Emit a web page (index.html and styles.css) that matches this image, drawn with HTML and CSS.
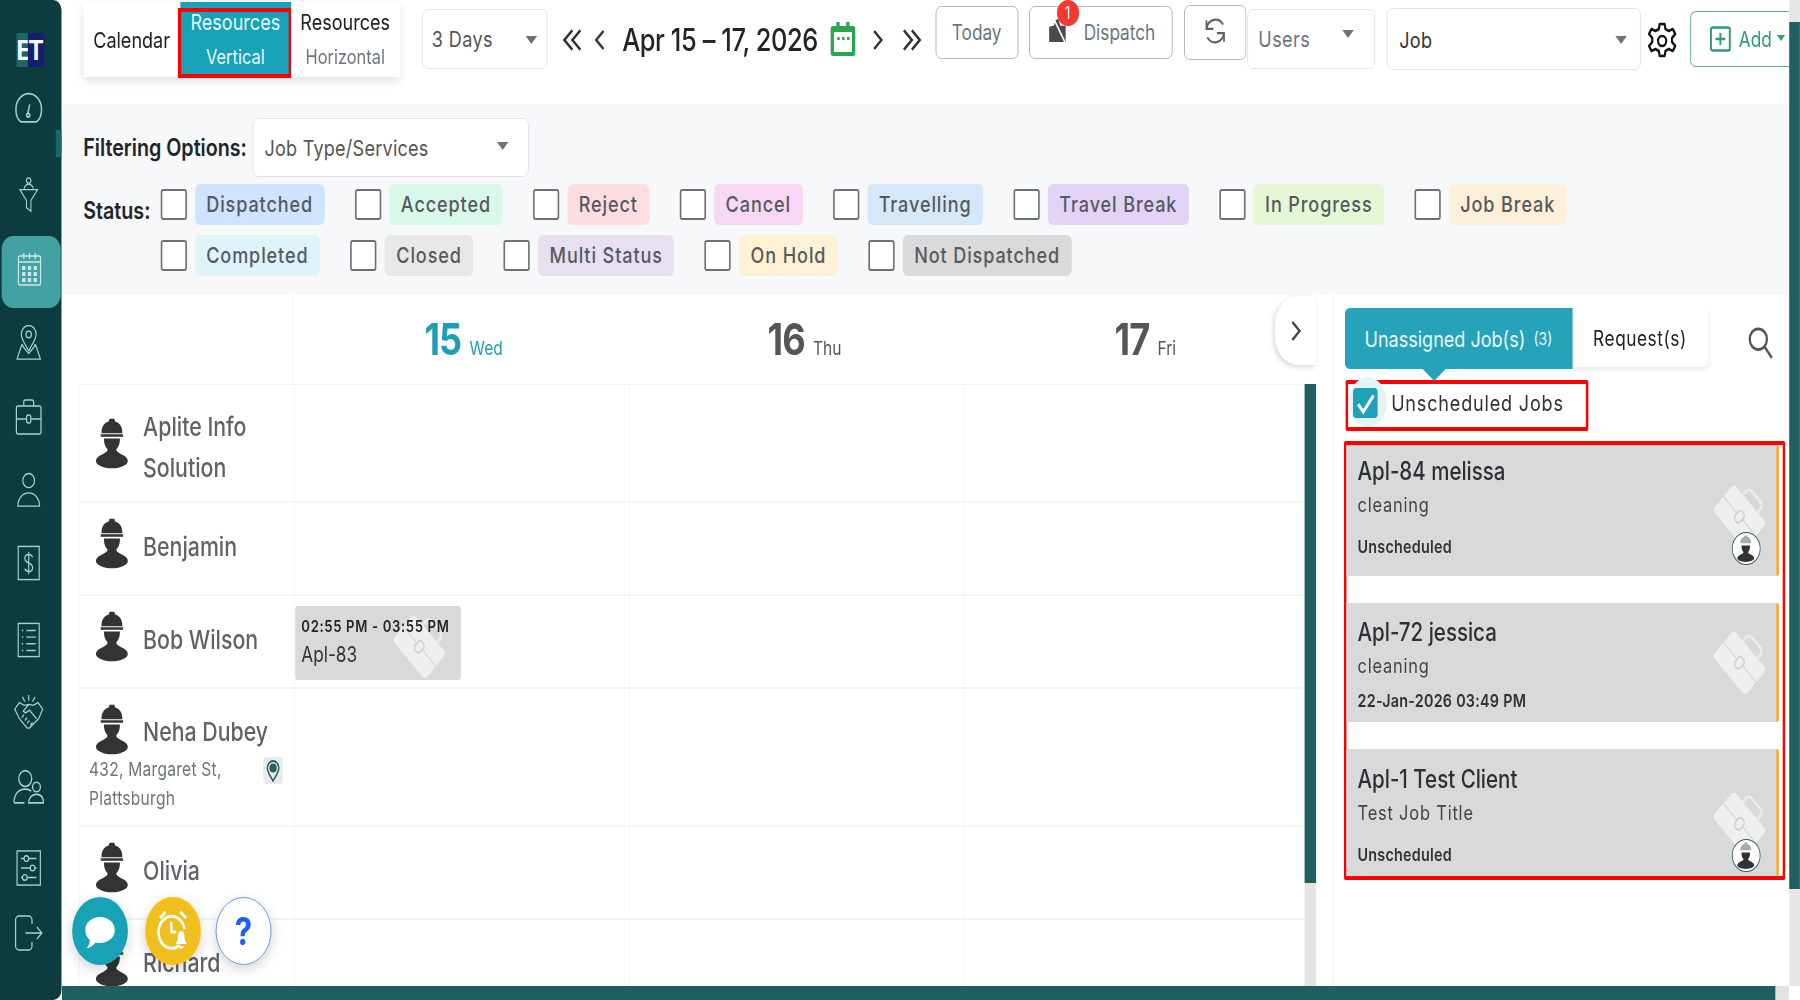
FILE: index.html
```html
<!DOCTYPE html>
<html lang="en">
<head>
<meta charset="utf-8">
<title>Scheduler</title>
<link rel="stylesheet" href="styles.css">
</head>
<body>
<svg class="defs" width="0" height="0" aria-hidden="true">
  <symbol id="worker" viewBox="0 0 40 52">
    <path fill="#333" d="M7 15c0-6 4-10 9-11l1-3h6l1 3c5 1 9 5 9 11v1H7z"/>
    <path fill="#333" d="M6 17h28v2.500H6z"/>
    <path fill="#333" d="M10 21.500h20c0 5-1 8-4.500 11 0 2 1.500 3 5 4.500 5 2 9.500 4 9.500 7.500 0 4-9 7.500-20 7.500s-20-3.500-20-7.500c0-3.500 4.500-5.500 9.500-7.500 3.500-1.500 5-2.500 5-4.500-3.500-3-4.500-6-4.500-11z"/>
  </symbol>
  <symbol id="case" viewBox="0 0 64 64">
    <g transform="rotate(45 32 32)">
      <rect x="7" y="19" width="50" height="33" rx="4" fill="#efefef"/>
      <path d="M21 19v-5a4 4 0 0 1 4-4h14a4 4 0 0 1 4 4v5" fill="none" stroke="#ececec" stroke-width="2.500"/>
      <path d="M7 35h50" stroke="#d9d9d9" stroke-width="1.500"/>
      <rect x="28" y="30" width="8" height="11" rx="3.500" fill="#efefef" stroke="#cfcfcf" stroke-width="1.500"/>
    </g>
  </symbol>
  <symbol id="worker-mini" viewBox="0 0 40 52">
    <path fill="#a9abab" d="M7 16c0-7 5-12 9-12l1-3h6l1 3c4 0 9 5 9 12z"/>
    <path fill="#333" d="M10 20h20c0 6-1 9-4.500 12.500 0 2 1.500 3 5 4.500 5 2 9.500 4 9.500 7.500 0 4-9 7.500-20 7.500s-20-3.500-20-7.500c0-3.500 4.500-5.500 9.500-7.500 3.500-1.500 5-2.500 5-4.500-3.500-3.500-4.500-6.500-4.500-12.500z"/>
  </symbol>
</svg>
<div class="viewport">
<div class="stage">
  <aside class="sidebar">
    <div class="logo"><span class="logo-e">E</span><span class="logo-t">T</span></div>
    <span class="notch"></span>
    <nav class="nav">
      <a class="nav-item"><svg class="ico" viewBox="0 0 30 30"><path d="M7 26.500C3.500 24.500 2 20 2 16a13 13 0 0 1 26 0c0 4-1.500 8.500-5 10.500zM14 20l2-8"/><circle cx="14.500" cy="21" r="1.500"/></svg></a>
      <a class="nav-item"><svg class="ico" viewBox="0 0 30 40"><circle cx="15" cy="4" r="3"/><path d="M9 13c0-3 3-5 6-5s6 2 6 5M3 14h24l-9 12v12l-6-4v-8z"/></svg></a>
      <a class="nav-item nav-active"><svg class="ico ico-cal" viewBox="0 0 30 36"><rect x="1.500" y="5" width="27" height="29" rx="2"/><path d="M1.500 11h27M8 2v6M15 2v6M22 2v6"/><g class="dots"><rect x="6" y="15" width="4" height="4"/><rect x="13" y="15" width="4" height="4"/><rect x="20" y="15" width="4" height="4"/><rect x="6" y="21" width="4" height="4"/><rect x="13" y="21" width="4" height="4"/><rect x="20" y="21" width="4" height="4"/><rect x="6" y="27" width="4" height="4"/><rect x="13" y="27" width="4" height="4"/><rect x="20" y="27" width="4" height="4"/></g></svg></a>
      <a class="nav-item"><svg class="ico" viewBox="0 0 32 38"><path d="M16 27C11 20 6.500 15 6.500 10a9.500 9.500 0 0 1 19 0c0 5-4.500 10-9.500 17z"/><circle cx="16" cy="10" r="3.500"/><path d="M9 21l-2 0-6 15h30l-6-15h-2M7 21l9 9 9-9"/></svg></a>
      <a class="nav-item"><svg class="ico" viewBox="0 0 32 36"><rect x="1" y="7" width="30" height="28" rx="2"/><path d="M10 7V3a2 2 0 0 1 2-2h8a2 2 0 0 1 2 2v4M1 20h12M19 20h12"/><rect x="13.500" y="16" width="5" height="8" rx="2"/></svg></a>
      <a class="nav-item"><svg class="ico" viewBox="0 0 32 38"><circle cx="16" cy="9" r="7.500"/><path d="M2 36c0-8 6-14 14-14s14 6 14 14z"/></svg></a>
      <a class="nav-item"><svg class="ico" viewBox="0 0 30 38"><rect x="1.500" y="1.500" width="27" height="35"/><path d="M20 13c-1-2-3-3-5-3-3 0-5 1.500-5 4s2 4 5 5 5 2.500 5 5-2 4-5 4c-2 0-4-1-5-3M15 7v24"/></svg></a>
      <a class="nav-item"><svg class="ico" viewBox="0 0 30 38"><rect x="1.500" y="1.500" width="27" height="35"/><path d="M12 9h12M12 16h12M12 23h12M12 30h12M6 9h2M6 16h2M6 23h2M6 30h2"/></svg></a>
      <a class="nav-item"><svg class="ico" viewBox="0 0 38 38"><path d="M19 1v6M11 3l3 5M27 3l-3 5M1 16l6-7 6 3 6-1 6 1 6-3 6 7-5 10-12 10h-3L7 26zM19 11l-7 7 3 2 5-3 9 9M14 28l3-3M17 31l3-3M10 25l3-3M21 33l3-3"/></svg></a>
      <a class="nav-item"><svg class="ico" viewBox="0 0 36 34"><circle cx="14" cy="9" r="7.500"/><path d="M1 32c0-8 5-13 13-13 3 0 5 .500 7 2M13 32H1"/><circle cx="27" cy="17" r="4.500"/><path d="M18 32c0-5 4-8 9-8s8 3 8 8z"/></svg></a>
      <a class="nav-item"><svg class="ico" viewBox="0 0 32 38"><rect x="1" y="1" width="30" height="36"/><path d="M6 9h4M16 9h10M6 19h12M24 19h2M6 29h2M14 29h12"/><circle cx="13" cy="9" r="3"/><circle cx="21" cy="19" r="3"/><circle cx="11" cy="29" r="3"/></svg></a>
      <a class="nav-item"><svg class="ico" viewBox="0 0 34 36"><path d="M21 9V5a4 4 0 0 0-4-4H5a4 4 0 0 0-4 4v26a4 4 0 0 0 4 4h12a4 4 0 0 0 4-4v-4M13 18h20M27 12l6 6-6 6"/></svg></a>
    </nav>
  </aside>

  <div class="main">
    <div class="body">
      <div class="content">
        <header class="topbar">
          <div class="tabs">
            <div class="tab tab-cal"><span>Calendar</span></div>
            <div class="tab tab-vert"><span>Resources</span><small>Vertical</small></div>
            <div class="tab tab-horiz"><span>Resources</span><small>Horizontal</small></div>
          </div>
          <div class="select sel-days"><span>3 Days</span><i class="caret"></i></div>
          <svg class="chev chev-d1" viewBox="0 0 24 24"><path d="M12 3 3 12l9 9M21 3l-9 9 9 9"/></svg>
          <svg class="chev chev-s1" viewBox="0 0 14 24"><path d="M12 3 3 12l9 9"/></svg>
          <div class="date">Apr 15 – 17, 2026</div>
          <svg class="date-ico" viewBox="0 0 32 34"><path fill="#2ea44f" d="M8 0h4v4h8V0h4v4h4a3 3 0 0 1 3 3v24a3 3 0 0 1-3 3H4a3 3 0 0 1-3-3V7a3 3 0 0 1 3-3h4z"/><rect x="5" y="10" width="22" height="20" fill="#fff"/><path fill="#2ea44f" d="M9 15h3v3H9zM15 15h3v3h-3zM21 15h3v3h-3z"/></svg>
          <svg class="chev chev-s2" viewBox="0 0 14 24"><path d="M2 3l9 9-9 9"/></svg>
          <svg class="chev chev-d2" viewBox="0 0 24 24"><path d="M3 3l9 9-9 9M12 3l9 9-9 9"/></svg>
          <div class="btn btn-today">Today</div>
          <div class="btn btn-dispatch">
            <svg class="dispatch-ico" viewBox="0 0 24 24"><path fill="#4a4a4a" d="M1 8l6-1 2-6 4-1 2 7h7v17H1z"/><path d="M7 0l14 24" stroke="#fff" stroke-width="2"/></svg>
            <span>Dispatch</span>
            <b class="badge">1</b>
          </div>
          <div class="btn btn-refresh"><svg viewBox="0 0 28 28" class="refresh-ico"><path d="M4 12A10.500 10.500 0 0 1 23 8M24 16A10.500 10.500 0 0 1 5 20M4 4v8h8M24 24v-8h-8"/></svg></div>
          <div class="select sel-users"><span>Users</span><i class="caret"></i></div>
          <div class="select sel-job"><span>Job</span><i class="caret"></i></div>
          <svg class="gear" viewBox="0 0 38 38"><path d="M16 2h6l1 5 4 2 5-2 3 5-4 4v4l4 4-3 5-5-2-4 2-1 5h-6l-1-5-4-2-5 2-3-5 4-4v-4l-4-4 3-5 5 2 4-2z" stroke-linejoin="round"/><circle cx="19" cy="19" r="5"/></svg>
          <div class="btn-add">
            <svg class="add-ico" viewBox="0 0 26 26"><rect x="1.500" y="1.500" width="23" height="23" rx="2"/><path d="M13 7v12M7 13h12"/></svg>
            <span>Add</span><i class="caret caret-green"></i>
          </div>
        </header>

        <section class="filters">
          <div class="filter-row">
            <label class="filter-label">Filtering Options:</label>
            <div class="select sel-type"><span>Job Type/Services</span><i class="caret"></i></div>
          </div>
          <div class="status-block">
            <label class="status-label">Status:</label>
            <div class="status-rows">
              <div class="status-row">
                <span class="cb"></span><span class="pill p-dispatched">Dispatched</span>
                <span class="cb"></span><span class="pill p-accepted">Accepted</span>
                <span class="cb"></span><span class="pill p-reject">Reject</span>
                <span class="cb"></span><span class="pill p-cancel">Cancel</span>
                <span class="cb"></span><span class="pill p-travelling">Travelling</span>
                <span class="cb"></span><span class="pill p-break">Travel Break</span>
                <span class="cb"></span><span class="pill p-progress">In Progress</span>
                <span class="cb"></span><span class="pill p-jobbreak">Job Break</span>
              </div>
              <div class="status-row">
                <span class="cb"></span><span class="pill p-completed">Completed</span>
                <span class="cb"></span><span class="pill p-closed">Closed</span>
                <span class="cb"></span><span class="pill p-multi">Multi Status</span>
                <span class="cb"></span><span class="pill p-hold">On Hold</span>
                <span class="cb"></span><span class="pill p-notdisp">Not Dispatched</span>
              </div>
            </div>
          </div>
        </section>

        <section class="workspace">
          <div class="scheduler">
            <div class="sched-head">
              <div class="head-blank"></div>
              <div class="day day-today"><b>15</b><span>Wed</span></div>
              <div class="day"><b>16</b><span>Thu</span></div>
              <div class="day"><b>17</b><span>Fri</span></div>
              <div class="collapse"><svg viewBox="0 0 14 24"><path d="M3 3l9 9-9 9"/></svg></div>
            </div>
            <div class="sched-body">
              <div class="rows">
                <div class="row row-a"><div class="res"><svg class="worker"><use href="#worker"/></svg><div class="res-name">Aplite Info<br>Solution</div></div><div class="cell"></div><div class="cell"></div><div class="cell"></div></div>
                <div class="row row-b"><div class="res"><svg class="worker"><use href="#worker"/></svg><div class="res-name">Benjamin</div></div><div class="cell"></div><div class="cell"></div><div class="cell"></div></div>
                <div class="row row-b"><div class="res"><svg class="worker"><use href="#worker"/></svg><div class="res-name">Bob Wilson</div></div>
                  <div class="cell">
                    <div class="event">
                      <svg class="wm wm-ev"><use href="#case"/></svg>
                      <div class="ev-time">02:55 PM - 03:55 PM</div>
                      <div class="ev-title">Apl-83</div>
                    </div>
                  </div><div class="cell"></div><div class="cell"></div></div>
                <div class="row row-n"><div class="res res-col"><div class="res-top"><svg class="worker"><use href="#worker"/></svg><div class="res-name">Neha Dubey</div></div>
                    <div class="addr"><span>432, Margaret St,<br>Plattsburgh</span><i class="pin"><svg viewBox="0 0 16 22"><path d="M8 21C4 15 1 12 1 8a7 7 0 0 1 14 0c0 4-3 7-7 13z" fill="none" stroke="#2f5d5f" stroke-width="1.800"/><circle cx="8" cy="8" r="4.500" fill="#2f5d5f"/></svg></i></div></div>
                  <div class="cell"></div><div class="cell"></div><div class="cell"></div></div>
                <div class="row row-b"><div class="res"><svg class="worker"><use href="#worker"/></svg><div class="res-name">Olivia</div></div><div class="cell"></div><div class="cell"></div><div class="cell"></div></div>
                <div class="row row-r"><div class="res"><svg class="worker"><use href="#worker"/></svg><div class="res-name">Richard</div></div><div class="cell"></div><div class="cell"></div><div class="cell"></div></div>
              </div>
              <div class="vscroll"><span class="vthumb"></span></div>
            </div>
          </div>

          <aside class="panel">
            <div class="panel-tabs">
              <div class="ptab ptab-on">Unassigned Job(s)<small>(3)</small></div>
              <div class="ptab ptab-off">Request(s)</div>
              <svg class="search" viewBox="0 0 28 30"><circle cx="12" cy="12" r="9.500"/><path d="M19 19l8 10"/></svg>
            </div>
            <div class="unsched">
              <span class="cb-on"><svg viewBox="0 0 24 24"><path d="M5 13l5 6 10-13"/></svg></span>
              <span class="unsched-text">Unscheduled Jobs</span>
            </div>
            <div class="cards">
              <article class="card card-a">
                <svg class="wm wm-card"><use href="#case"/></svg>
                <h3>Apl-84 melissa</h3><p class="sub">cleaning</p><p class="when">Unscheduled</p>
                <span class="avatar"><svg><use href="#worker-mini"/></svg></span>
              </article>
              <article class="card card-b">
                <svg class="wm wm-card"><use href="#case"/></svg>
                <h3>Apl-72 jessica</h3><p class="sub">cleaning</p><p class="when">22-Jan-2026 03:49 PM</p>
              </article>
              <article class="card card-c">
                <svg class="wm wm-card"><use href="#case"/></svg>
                <h3>Apl-1 Test Client</h3><p class="sub">Test Job Title</p><p class="when">Unscheduled</p>
                <span class="avatar"><svg><use href="#worker-mini"/></svg></span>
              </article>
            </div>
          </aside>
        </section>
      </div>
      <div class="rail"><span class="rail-thumb"></span></div>
    </div>
    <div class="hbar"><span class="hthumb"></span></div>
  </div>

  <div class="fab fab-chat"><svg viewBox="0 0 40 36"><path fill="#fff" d="M20 2c10 0 18 5.500 18 13s-8 13-18 13c-2 0-4-.200-5.500-.600C12 30 8 33 4 33c2-2 3.500-5 3.500-8C4 22.500 2 19 2 15 2 7.500 10 2 20 2z"/></svg></div>
  <div class="fab fab-alarm"><svg viewBox="0 0 44 44"><g fill="none" stroke="#fff" stroke-width="3"><path d="M30 36A16 16 0 1 1 36 20"/><path d="M6 9l7-6M38 9l-7-6"/><path d="M20 13v10h6"/></g><path fill="#fff" d="M32 22c3 0 4 3 4 6 0 4 2 5 3 7H25c1-2 3-3 3-7 0-3 1-6 4-6zM29 37h6c0 2-1.500 3-3 3s-3-1-3-3z"/></svg></div>
  <div class="fab fab-help">?</div>
</div>
</div>
</body>
</html>
```
FILE: styles.css
```css
* { box-sizing: border-box; }
html, body { margin: 0; padding: 0; height: 100%; overflow: hidden; background: #fff; }
body { font-family: Inter, "Noto Sans", sans-serif; color: #212529; }
.defs { position: absolute; }

/* The reference is a wide page squeezed into the window horizontally. */
.viewport { width: 1800px; height: 1000px; overflow: hidden; }
.stage { position: relative; display: flex; width: 2195px; height: 1000px; transform: scaleX(.82); transform-origin: 0 0; overflow: hidden; }

/* sidebar */
.sidebar { position: relative; width: 74.5px; flex: none; height: 1000px; background: #0c3c3f; border-radius: 0 10px 10px 0; z-index: 3; }
.logo { display: flex; width: 34px; height: 34px; margin: 33px 0 0 20px; font: 700 29px/34px "Liberation Sans", sans-serif; color: #fff; text-align: center; }
.logo-e { width: 14px; background: #1f6664; }
.logo-t { width: 20px; background: #14206e; }
.notch { position: absolute; right: 0; top: 130px; width: 7px; height: 27px; background: #176a69; }
.nav { display: flex; flex-direction: column; margin-top: 15px; }
.nav-item { display: flex; height: 52px; align-items: center; justify-content: center; padding-right: 4px; }
.nav-item:nth-child(2) { margin-top: 35px; }
.nav-item:nth-child(3) { margin-top: 15px; }
.nav-item:nth-child(4) { margin-top: 9px; }
.nav-item:nth-child(5) { margin-top: 22px; }
.nav-item:nth-child(6) { margin-top: 21px; }
.nav-item:nth-child(7) { margin-top: 21px; }
.nav-item:nth-child(8) { margin-top: 25px; }
.nav-item:nth-child(9) { margin-top: 20px; }
.nav-item:nth-child(10) { margin-top: 23px; }
.nav-item:nth-child(11) { margin-top: 29px; }
.nav-item:nth-child(12) { margin-top: 13px; }
.nav-active { height: 72px; margin-left: 1.500px; margin-right: 1px; background: #42a1a2; border-radius: 14px; padding-bottom: 7px; }
.ico { width: 38px; height: 36px; fill: none; stroke: #a6d2cd; stroke-width: 1.500; }
.ico-cal .dots { fill: #cfe6e4; stroke: none; }
.ico-cal { stroke: #cfe6e4; }

/* main */
.main { flex: 1; display: flex; flex-direction: column; min-width: 0; }
.body { display: flex; height: 986px; }
.content { flex: 1; min-width: 0; display: flex; flex-direction: column; }
.rail { position: relative; width: 13.500px; flex: none; background: #e6e6e6; }
.rail-thumb { position: absolute; left: 0; right: 0; top: 22px; height: 867px; background: #1f5f60; }
.hbar { height: 14px; width: 2107px; background: #e3e3e3; flex: none; }
.hthumb { display: block; width: 2090px; height: 14px; background: #1f5f60; }

/* topbar */
.topbar { height: 104px; flex: none; display: flex; align-items: flex-start; padding-left: 27px; overflow: hidden; }
.tabs { display: flex; height: 75px; margin-top: 2px; background: #fff; box-shadow: 0 4px 10px rgba(0,0,0,.12); }
.tab { display: flex; flex-direction: column; align-items: center; justify-content: center; font-size: 22px; color: #222; }
.tab-cal { width: 118px; }
.tab-vert { position: relative; width: 135px; background: #17a2b8; color: #e8f8fa; z-index: 1; }
.tab-vert::after { content: ""; position: absolute; left: -3px; right: 0; top: 6px; bottom: -1px; border: 4px solid #f00; border-left-width: 4px; border-right-width: 3.500px; }
.tab-horiz { width: 133px; }
.tab span { line-height: 34px; }
.tab small { font-size: 20px; line-height: 34px; margin-top: 1px; }
.tab-horiz small { color: #6c757d; }
.select { position: relative; display: flex; align-items: center; background: #fff; border: 1.500px solid #dfe1e8; border-radius: 7px; font-size: 22px; color: #555; padding-left: 11px; letter-spacing: .5px; }
.caret { position: absolute; right: 12px; top: 50%; margin-top: -3px; border: 7.500px solid transparent; border-top: 8.500px solid #6f7277; border-bottom: 0; }
.sel-days { width: 155px; height: 60px; margin: 9px 0 0 27px; }
.chev { fill: none; stroke: #333; stroke-width: 2.600; height: 26px; flex: none; margin-top: 27px; }
.chev-d1 { width: 26px; margin-left: 17px; }
.chev-s1 { width: 14px; margin-left: 13px; }
.date { width: 246px; margin: 21px 0 0 21px; font-size: 31px; line-height: 38px; font-weight: 500; letter-spacing: -.5px; color: #212529; white-space: nowrap; }
.date-ico { width: 32px; height: 34px; flex: none; margin: 22px 0 0 10px; }
.chev-s2 { width: 14px; margin-left: 20px; }
.chev-d2 { width: 26px; margin-left: 21px; }
.btn { position: relative; display: flex; align-items: center; justify-content: center; height: 53px; margin-top: 6px; border: 1.500px solid #adb1b6; border-radius: 7px; font-size: 21px; color: #6c757d; background: #fff; flex: none; }
.btn-today { width: 101px; margin-left: 16px; }
.btn-dispatch { width: 175px; margin-left: 13px; justify-content: flex-start; padding-left: 22px; overflow: visible; }
.dispatch-ico { width: 24px; height: 23px; margin-right: 20px; margin-top: -5px; }
.badge { position: absolute; left: 33px; top: -7.500px; width: 27px; height: 26px; border-radius: 50%; background: #f4392f; color: #fff; font-size: 17px; font-weight: 400; line-height: 26px; text-align: center; }
.btn-refresh { width: 76px; height: 55px; margin: 5px 0 0 14px; }
.refresh-ico { width: 34px; height: 30px; fill: none; stroke: #5f6368; stroke-width: 2; margin-bottom: 4px; }
.sel-users { width: 158.5px; height: 60px; margin: 9px 0 0 1px; padding-left: 13px; }
.sel-users span { color: #6c757d; }
.sel-users .caret { right: 25px; margin-top: -9px; }
.sel-job { width: 313px; height: 62px; margin: 8px 0 0 14px; padding-left: 14px; }
.sel-job span { color: #333; margin-top: 2px; }
.sel-job .caret { right: 16px; }
.gear { width: 38px; height: 38px; flex: none; margin: 22px 0 0 7px; fill: none; stroke: #111; stroke-width: 2.600; }
.btn-add { display: flex; align-items: center; width: 121px; height: 56px; flex: none; margin: 11px 0 0 15px; padding-left: 23px; border: 1.500px solid #5fb08d; border-right: 0; border-radius: 7px 0 0 7px; color: #2f9d6e; font-size: 21px; position: relative; }
.add-ico { width: 26px; height: 28px; fill: none; stroke: #2f9d6e; stroke-width: 2.400; margin-right: 10px; flex: none; }
.caret-green { right: 5px; border-width: 5px; border-top: 6px solid #2f9d6e; border-bottom: 0; margin-top: -4px; }

/* filters */
.filters { height: 191px; flex: none; background: #f7f8fa; padding: 14px 0 0 27px; }
.filter-row { display: flex; align-items: center; }
.filter-label, .status-label { font-size: 24px; font-weight: 600; color: #212529; white-space: nowrap; }
.filter-label { width: 206px; }
.sel-type { width: 337px; height: 59px; padding-left: 14px; letter-spacing: .3px; }
.sel-type .caret { right: 24px; margin-top: -6px; }
.status-block { display: flex; margin-top: 7px; }
.status-label { width: 94px; padding-top: 12px; }
.status-rows { display: flex; flex-direction: column; gap: 10px; }
.status-row { display: flex; align-items: center; }
.cb { width: 32px; height: 31px; border: 2.500px solid #6c7274; border-radius: 3px; margin-left: 37px; margin-right: 10px; background: #fff; flex: none; }
.status-row .cb:first-child { margin-left: 0; }
.pill { height: 41px; padding: 0 14px; border-radius: 6px; font-size: 22px; line-height: 41px; font-weight: 500; letter-spacing: 1.100px; color: #555a60; white-space: nowrap; }
.p-dispatched { background: #cfe2ff; }
.p-accepted { background: #d8f8ea; }
.p-reject { background: #ffdde0; }
.p-cancel { background: #f8d7f4; }
.p-travelling { background: #d6e8f7; }
.p-break { background: #e3d4f7; }
.p-progress { background: #e6f7d6; }
.p-jobbreak { background: #fdf0d8; }
.p-completed { background: #dff3fb; }
.p-closed { background: #e8e8e8; }
.p-multi { background: #e8e0f0; }
.p-hold { background: #fdf2d6; }
.p-notdisp { background: #dadada; }

/* workspace */
.workspace { flex: 1; min-height: 0; display: flex; }
.scheduler { width: 1550px; flex: none; display: flex; flex-direction: column; padding: 0 20px 0 21px; }
.sched-head { position: relative; display: grid; grid-template-columns: 262px repeat(3, 1fr); height: 89px; flex: none; }
.head-blank { border-right: 1px solid #eff0f1; }
.day { display: flex; align-items: baseline; justify-content: center; gap: 10px; padding-top: 17px; color: #555; }
.day b { font-size: 44px; font-weight: 700; letter-spacing: -1px; }
.day span { font-size: 19px; }
.day-today { color: #1f9db5; }
.collapse { position: absolute; right: 0; top: 1px; width: 50px; height: 69px; background: #fff; border-radius: 28px 0 0 28px; box-shadow: -2px 2px 6px rgba(0,0,0,.16); display: flex; align-items: center; justify-content: center; }
.collapse svg { width: 14px; height: 24px; fill: none; stroke: #444; stroke-width: 2.500; }
.sched-body { flex: 1; min-height: 0; display: flex; }
.rows { flex: 1; min-width: 0; overflow: hidden; border-left: 1px solid #f0f0f0; border-top: 1px solid #f3f4f5; }
.row { display: grid; grid-template-columns: 261px 409px 409px 1fr; border-bottom: 2px solid #f3f4f5; }
.row-a { height: 118px; }
.row-b { height: 93px; }
.row-n { height: 138px; }
.row-r { height: 90px; border: 0; }
.cell { position: relative; border-left: 1px solid #f3f4f5; min-width: 0; }
.res { display: flex; align-items: center; padding-left: 20px; }
.row-b .res { padding-bottom: 12px; }
.row-b .res-name { margin-top: 9px; }
.row-r .res { align-items: flex-start; padding-top: 15px; }
.row-r .res-name { margin-top: 8px; }
.res-col { flex-direction: column; align-items: flex-start; padding-left: 12px; }
.res-top { display: flex; align-items: center; padding: 14px 0 0 8px; }
.worker { width: 39px; height: 52px; flex: none; }
.res-name { margin-left: 19px; font-size: 26px; line-height: 40px; font-weight: 500; color: #5f6368; white-space: nowrap; }
.row-a .res-name { margin-top: 7px; line-height: 41px; }
.res-top .res-name { margin-top: 6px; }
.addr { position: relative; font-size: 19px; line-height: 29px; letter-spacing: .3px; color: #6c757d; width: 236px; }
.pin { position: absolute; right: 0; top: 2px; display: flex; align-items: center; justify-content: center; width: 24px; height: 27px; border-radius: 4px; background: #e6ecec; }
.pin svg { width: 18px; height: 22px; }
.event { position: relative; margin: 10px 0 0 1px; width: 202px; height: 74px; background: #d9d9d9; border-radius: 3px; padding: 10px 0 0 8px; overflow: hidden; }
.ev-time { position: relative; font-size: 16px; line-height: 20px; font-weight: 600; color: #212529; letter-spacing: .8px; white-space: nowrap; }
.ev-title { position: relative; font-size: 21px; line-height: 30px; margin-top: 4px; color: #333; }
.wm { position: absolute; }
.wm-ev { width: 72px; height: 72px; right: 12px; top: 2px; }
.vscroll { position: relative; width: 13.500px; flex: none; background: #e4e4e4; }
.vthumb { display: block; height: 499px; background: #1f5f60; }

/* right panel */
.panel { flex: 1; min-width: 0; border-left: 1px solid #e8eaee; padding: 13px 0 0 14px; }
.panel-tabs { position: relative; z-index: 1; display: flex; align-items: flex-start; height: 61px; }
.ptab { display: flex; align-items: center; justify-content: center; flex: none; }
.ptab-on { position: relative; width: 278px; height: 61px; background: #26a3b8; color: #e9f7f9; font-size: 22px; border-radius: 6px 0 0 6px; }
.ptab-on small { font-size: 17px; margin-left: 10px; }
.ptab-on::after { content: ""; position: absolute; left: 95px; bottom: -12px; border: 14px solid transparent; border-top: 12px solid #26a3b8; border-bottom: 0; }
.ptab-off { width: 165px; height: 59px; font-size: 21px; letter-spacing: .7px; color: #222; background: #fff; border-radius: 0 6px 6px 0; box-shadow: 0 3px 6px rgba(0,0,0,.08); padding-top: 2px; }
.search { width: 33px; height: 33px; margin: 18px 0 0 47px; fill: none; stroke: #555; stroke-width: 2.500; }
.unsched { position: relative; display: flex; align-items: center; width: 296px; height: 51px; margin: 11px 0 0 1px; padding-bottom: 5px; border: 4px solid #f00; border-left-width: 3.500px; border-right-width: 3.500px; border-radius: 2px; isolation: isolate; }
.cb-on { position: relative; display: flex; width: 30px; height: 30px; margin-left: 6px; background: #1fa2b7; border-radius: 4px; }
.cb-on::before { content: ""; position: absolute; left: -5px; top: -11px; width: 46px; height: 50px; border-radius: 50%; background: #e3f3f6; z-index: -1; }
.cb-on svg { width: 30px; height: 30px; fill: none; stroke: #fff; stroke-width: 2.800; }
.unsched-text { margin-left: 17px; font-size: 22px; letter-spacing: 1px; color: #333; white-space: nowrap; }
.cards { position: relative; display: flex; flex-direction: column; gap: 27px; width: 538px; height: 439px; margin: 10px 0 0 -1px; border: 4px solid #f00; border-left-width: 3.500px; border-right-width: 3.500px; border-radius: 2px; padding-right: 4px; }
.card { position: relative; flex: none; background: #d9d9d9; border-right: 4px solid #f5b042; border-radius: 0 4px 4px 0; padding: 0 0 0 14px; }
.card-a { height: 131px; padding-top: 10px; }
.card-b { height: 119px; }
.card-c { height: 127px; }
.card h3 { position: relative; margin: 0; font-size: 25px; line-height: 32px; font-weight: 500; color: #2b3033; white-space: nowrap; }
.card-b h3 { margin-top: 13px; }
.card-c h3 { margin-top: 14px; }
.sub { position: relative; margin: 3px 0 0; font-size: 20px; line-height: 30px; letter-spacing: 1px; color: #444; white-space: nowrap; }
.when { position: relative; margin: 15px 0 0; font-size: 17.500px; line-height: 24px; font-weight: 600; letter-spacing: .3px; color: #333; white-space: nowrap; }
.card-b .when { margin-top: 8px; }
.wm-card { width: 72px; height: 72px; right: 6px; top: 33px; }
.card-b .wm-card { top: 21px; }
.card-c .wm-card { top: 36px; }
.avatar { position: absolute; right: 19px; bottom: 11px; display: flex; align-items: center; justify-content: center; width: 35px; height: 33px; border-radius: 50%; background: #fff; border: 1px solid #2f5d5f; }
.card-c .avatar { bottom: 4px; }
.avatar svg { width: 22px; height: 27px; }

/* floating buttons */
.fab { position: absolute; top: 897px; width: 68px; height: 68px; border-radius: 50%; display: flex; align-items: center; justify-content: center; z-index: 4; box-shadow: 0 4px 14px rgba(0,0,0,.18); }
.fab-chat { left: 88px; background: #17a2b8; }
.fab-chat svg { width: 42px; height: 36px; margin-top: 4px; }
.fab-alarm { left: 177px; background: #edbf1f; border: 3px solid #fbbf0f; }
.fab-alarm svg { width: 46px; height: 44px; }
.fab-help { left: 263px; background: #fff; border: 1.500px solid #5a90f0; color: #1a62f5; font: 700 38px/1 Inter, sans-serif; }
```
